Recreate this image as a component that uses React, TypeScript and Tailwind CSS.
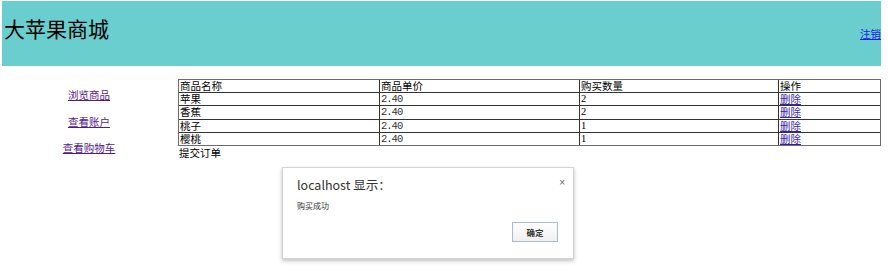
import React from "react";

const cjk = "font-['Noto_Sans_CJK_SC','Noto_Sans',sans-serif]";

const rows = [
    { name: "苹果", price: "2.40", qty: "2" },
    { name: "香蕉", price: "2.40", qty: "2" },
    { name: "桃子", price: "2.40", qty: "1" },
    { name: "樱桃", price: "2.40", qty: "1" },
];

export default function App() {

    return (

        <div className={`relative w-[888px] h-[273px] bg-white overflow-hidden text-black ${cjk}`}>

            {/* Header */}
            <div className="ml-[2px] mt-[1px] w-[879px] h-[65px] bg-[#6acece] flex items-start justify-between">

                <h1 className="ml-[2px] mt-[17px] text-[21px] leading-[21px] font-normal">
                    大苹果商城
                </h1>

                <a href="#" className="mt-[27px] text-[10.5px] leading-[12px] text-[#1a1aee] underline">
                    注销
                </a>

            </div>

            <div className="flex mt-[13px]">

                {/* Nav */}
                <div className="w-[178px] flex flex-col items-center pt-[10px] gap-[14.5px] text-[10.5px] leading-[12px]">

                    <a href="#" className="text-[#551a8b] underline">浏览商品</a>
                    <a href="#" className="text-[#551a8b] underline">查看账户</a>
                    <a href="#" className="text-[#551a8b] underline">查看购物车</a>

                </div>

                {/* Cart */}
                <div className="w-[703px]">

                    <div className="border border-[#6b6b6b] text-[10.5px] leading-[12px]">

                        <div className="grid grid-cols-[200px_200px_199px_1fr] h-[12.2px] overflow-visible">
                            <div className="pl-[1px]">商品名称</div>
                            <div className="pl-[1px] border-l border-[#333]">商品单价</div>
                            <div className="pl-[1px] border-l border-[#333]">购买数量</div>
                            <div className="pl-[1px] border-l border-[#333]">操作</div>
                        </div>

                        {rows.map((r) => (
                            <div key={r.name} className="grid grid-cols-[200px_200px_199px_1fr] h-[13.2px] border-t border-[#333]">
                                <div className="pl-[1px]">{r.name}</div>
                                <div className="pl-[1px] border-l border-[#333] font-['Liberation_Mono',monospace] tracking-[-1px] text-[#333]">
                                    {r.price}
                                </div>
                                <div className="pl-[1px] border-l border-[#333] font-['Liberation_Serif',serif]">{r.qty}</div>
                                <div className="pl-[1px] border-l border-[#333]">
                                    <a href="#" className="text-[#3a1fb0] underline">删除</a>
                                </div>
                            </div>
                        ))}

                    </div>

                    <div className="pl-[1px] mt-[1px] text-[10.5px] leading-[12px]">
                        提交订单
                    </div>

                </div>

            </div>

            {/* Alert dialog */}
            <div className="absolute left-[282px] top-[167px] w-[292px] h-[92px] bg-white border border-[#d4d4d4] shadow-[0_2px_4px_rgba(0,0,0,0.25)] flex flex-col">

                <div className="flex justify-between pl-[14px] pr-[8px] pt-[10px]">
                    <span className="text-[12.5px] leading-[14px] text-[#333]">localhost 显示：</span>
                    <span className="text-[10px] leading-[10px] text-[#666] font-['Liberation_Sans',sans-serif]">×</span>
                </div>

                <div className="pl-[14px] mt-[9px] text-[8px] leading-[9px] text-[#333]">
                    购买成功
                </div>

                <div className="flex justify-end pr-[15px] mt-[12px]">
                    <button className="w-[46px] h-[20px] border border-[#a9b8d3] bg-gradient-to-b from-white to-[#f0f0f0] text-[8.5px] font-bold text-[#333]">
                        确定
                    </button>
                </div>

            </div>

        </div>

    );

}
